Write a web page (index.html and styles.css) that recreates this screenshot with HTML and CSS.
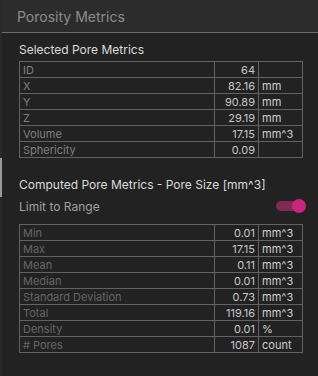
FILE: index.html
```
<!DOCTYPE html>
<html lang="en">
<head>
  <meta charset="UTF-8" />
  <meta name="viewport" content="width=device-width, initial-scale=1.0"/>
  <title>Porosity Metrics</title>
  <link rel="stylesheet" href="styles.css">
</head>
<body>

  <div class="panel">
    <div class="panel-header">Porosity Metrics</div>

    <div class="panel-body">
      <h2 class="section-title">Selected Pore Metrics</h2>
      <table class="metrics">
        <tr><td class="label">ID</td><td class="value">64</td><td class="unit"></td></tr>
        <tr><td class="label">X</td><td class="value">82.16</td><td class="unit">mm</td></tr>
        <tr><td class="label">Y</td><td class="value">90.89</td><td class="unit">mm</td></tr>
        <tr><td class="label">Z</td><td class="value">29.19</td><td class="unit">mm</td></tr>
        <tr><td class="label">Volume</td><td class="value">17.15</td><td class="unit">mm^3</td></tr>
        <tr><td class="label">Sphericity</td><td class="value">0.09</td><td class="unit"></td></tr>
      </table>

      <h2 class="section-title computed">Computed Pore Metrics - Pore Size [mm^3]</h2>

      <div class="range-row">
        <span>Limit to Range</span>
        <span class="toggle on"><span class="knob"></span></span>
      </div>

      <table class="metrics dim">
        <tr><td class="label">Min</td><td class="value">0.01</td><td class="unit">mm^3</td></tr>
        <tr><td class="label">Max</td><td class="value">17.15</td><td class="unit">mm^3</td></tr>
        <tr><td class="label">Mean</td><td class="value">0.11</td><td class="unit">mm^3</td></tr>
        <tr><td class="label">Median</td><td class="value">0.01</td><td class="unit">mm^3</td></tr>
        <tr><td class="label">Standard Deviation</td><td class="value">0.73</td><td class="unit">mm^3</td></tr>
        <tr><td class="label">Total</td><td class="value">119.16</td><td class="unit">mm^3</td></tr>
        <tr><td class="label">Density</td><td class="value">0.01</td><td class="unit">%</td></tr>
        <tr><td class="label"># Pores</td><td class="value">1087</td><td class="unit">count</td></tr>
      </table>
    </div>

    <!-- sliver of the neighbouring pane -->
    <div class="edge-mark"></div>
  </div>

</body>
</html>
```

FILE: styles.css
```
:root {
  --bg: #222222;
  --header-bg: #2c2c2c;
  --line: #626262;
  --text: #dcdcdc;
  --muted: #808080;
  --dim: #666666;
  --accent: #c8267c;
  --accent-track: #7d2a54;
}

* {
  box-sizing: border-box;
}

body {
  margin: 0;
  background: var(--bg);
  font-family: Inter, "Liberation Sans", Arial, sans-serif;
  color: var(--text);
}

.panel {
  position: relative;
  width: 318px;
  height: 376px;
  background: var(--bg);
  border-left: 2px solid #2a2a2a;
}

.panel-header {
  height: 33px;
  padding: 8px 0 0 15px;
  background: var(--header-bg);
  border-bottom: 1px solid #6c6c6c;
  font-size: 14px;
  color: #8c8c8c;
}

.panel-body {
  padding: 10px 14px 0 17px;
}

.section-title {
  margin: 0 0 5px;
  font-size: 12px;
  font-weight: normal;
  color: var(--text);
  height: 13px;
  line-height: 13px;
}

.section-title.computed {
  margin: 20px 0 6px;
}

.metrics {
  width: 284px;
  border-collapse: collapse;
  font-size: 11px;
  table-layout: fixed;
}

.metrics td {
  height: 16px;
  padding: 0 3px;
  border: 1px solid var(--line);
  line-height: 14px;
  white-space: nowrap;
}

.metrics .label {
  width: 195px;
  color: var(--muted);
}

.metrics .value {
  width: 44px;
  text-align: right;
  color: #c8c8c8;
}

.metrics .unit {
  color: #d0d0d0;
}

.metrics.dim .label {
  color: var(--dim);
}

.range-row {
  display: flex;
  justify-content: space-between;
  align-items: center;
  height: 16px;
  margin: 7px 0 10px;
  font-size: 12px;
  color: #a0a0a0;
}

.toggle {
  position: relative;
  display: inline-block;
  width: 28px;
  height: 10px;
  border-radius: 5px;
  background: var(--accent-track);
}

.toggle .knob {
  position: absolute;
  right: -2px;
  top: -2px;
  width: 14px;
  height: 14px;
  border-radius: 50%;
  background: var(--accent);
}

.edge-mark {
  position: absolute;
  left: -2px;
  top: 158px;
  width: 2px;
  height: 39px;
  background: #9a9a9a;
}
```
